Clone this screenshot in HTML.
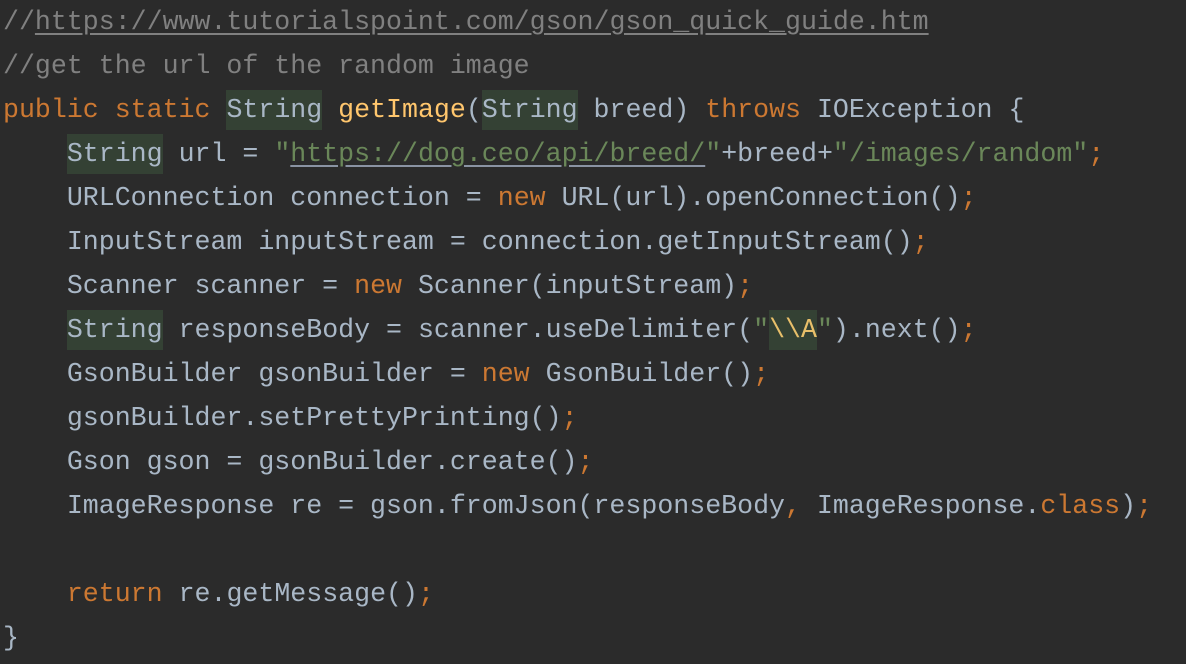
<!DOCTYPE html>
<html><head><style>
body{margin:0;background:#2b2b2b;width:1186px;height:664px;overflow:hidden}
pre{margin:0;position:absolute;top:0;left:3px;font-family:"Liberation Mono",monospace;font-size:26.6px;line-height:44px;color:#a9b7c6}
.k{color:#cc7832}.s{color:#6a8759}.c{color:#808080}.m{color:#ffc66d}
.h{background:#344134;display:inline-block;line-height:40px;vertical-align:top;margin-top:2px;height:40px}
.u{text-decoration:underline;text-decoration-color:#8a93a3;text-underline-offset:4px}
.cu{text-decoration:underline;text-underline-offset:4px}
.e{color:#e8bf6a}
</style></head><body><pre><span class="c">//<span class="cu">https://www.tutorialspoint.com/gson/gson_quick_guide.htm</span></span>
<span class="c">//get the url of the random image</span>
<span class="k">public static </span><span class="h">String</span> <span class="m">getImage</span>(<span class="h">String</span> breed) <span class="k">throws </span>IOException {
    <span class="h">String</span> url = <span class="s">"<span class="u">https://dog.ceo/api/breed/</span>"</span>+breed+<span class="s">"/images/random"</span><span class="k">;</span>
    URLConnection connection = <span class="k">new </span>URL(url).openConnection()<span class="k">;</span>
    InputStream inputStream = connection.getInputStream()<span class="k">;</span>
    Scanner scanner = <span class="k">new </span>Scanner(inputStream)<span class="k">;</span>
    <span class="h">String</span> responseBody = scanner.useDelimiter(<span class="s">"</span><span class="h e">\\A</span><span class="s">"</span>).next()<span class="k">;</span>
    GsonBuilder gsonBuilder = <span class="k">new </span>GsonBuilder()<span class="k">;</span>
    gsonBuilder.setPrettyPrinting()<span class="k">;</span>
    Gson gson = gsonBuilder.create()<span class="k">;</span>
    ImageResponse re = gson.fromJson(responseBody<span class="k">, </span>ImageResponse.<span class="k">class</span>)<span class="k">;</span>

    <span class="k">return </span>re.getMessage()<span class="k">;</span>
}</pre></body></html>
